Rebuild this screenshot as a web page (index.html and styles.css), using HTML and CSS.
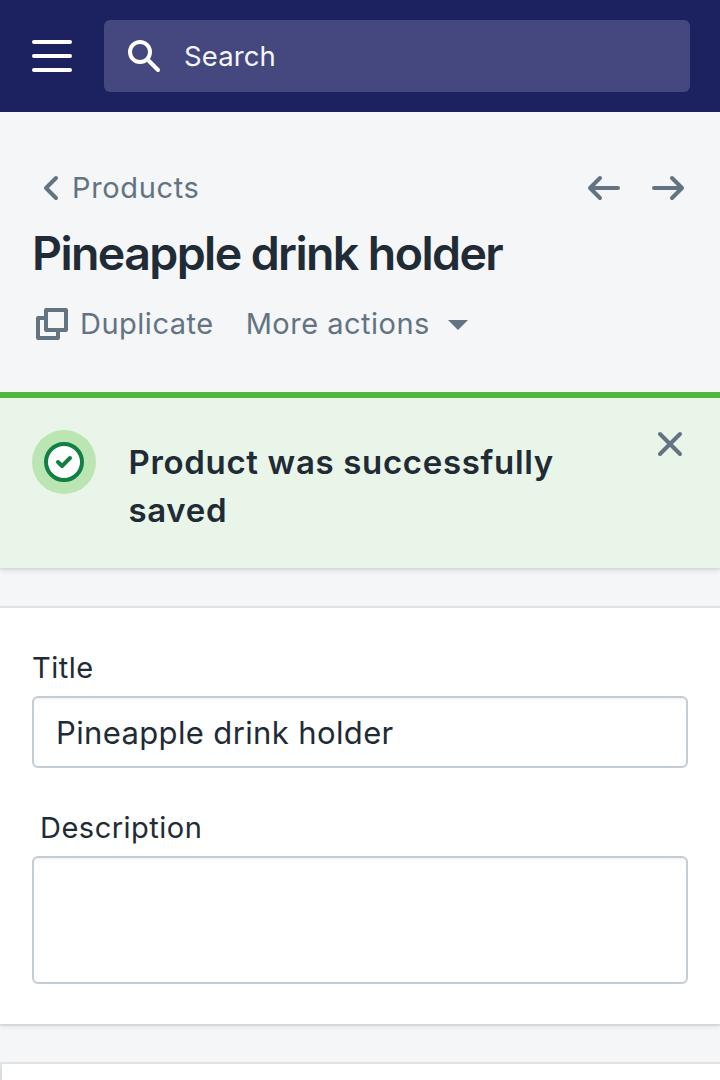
FILE: index.html
```html
<!DOCTYPE html>
<html lang="en">
<head>
<meta charset="utf-8">
<title>Pineapple drink holder</title>
<link rel="stylesheet" href="styles.css">
</head>
<body>
<header class="topbar">
  <svg class="menu" width="40" height="32" viewBox="0 0 40 32"><path d="M2 2h36M2 16h36M2 30h36"/></svg>
  <div class="search">
    <svg class="search-icon" width="32" height="32" viewBox="0 0 32 32"><circle cx="12" cy="12" r="10"/><path d="M19.5 19.5L30 30"/></svg>
    <span class="search-text">Search</span>
  </div>
</header>
<section class="page-header">
  <div class="nav-row">
    <a class="breadcrumb"><svg class="icon" width="16" height="24" viewBox="0 0 16 24"><path d="M14 2L4 12l10 10"/></svg><span class="crumb-text">Products</span></a>
    <div class="pager">
      <svg class="icon" width="32" height="24" viewBox="0 0 32 24"><path d="M12 2L2 12l10 10M2 12h28"/></svg>
      <svg class="icon" width="32" height="24" viewBox="0 0 32 24"><path d="M20 2l10 10-10 10M30 12H2"/></svg>
    </div>
  </div>
  <h1 class="title"><span class="title-text">Pineapple drink holder</span></h1>
  <div class="actions">
    <svg class="duplicate-icon" width="32" height="32" viewBox="0 0 32 32"><path d="M10 2h20v20H10zM10 10H2v20h20v-8"/></svg>
    <span class="duplicate-text">Duplicate</span>
    <span class="more-text">More actions</span>
    <svg class="caret" width="20" height="10" viewBox="0 0 20 10"><path d="M0 0h20L10 10z"/></svg>
  </div>
</section>
<section class="banner">
  <svg class="badge" width="64" height="64" viewBox="0 0 64 64"><circle class="halo" cx="32" cy="32" r="32"/><circle class="ring" cx="32" cy="32" r="18"/><path class="check" d="M26 32l4 4 8-8"/></svg>
  <p class="message">Product was successfully<br>saved</p>
  <svg class="icon close" width="24" height="24" viewBox="0 0 24 24"><path d="M2 2l20 20M22 2L2 22"/></svg>
</section>
<section class="card">
  <div class="label"><span class="label-title">Title</span></div>
  <div class="field"><span class="field-text">Pineapple drink holder</span></div>
  <div class="label description"><span class="label-desc">Description</span></div>
  <div class="field area"></div>
</section>
<section class="card next"></section>
</body>
</html>
```
FILE: styles.css
```css
* { box-sizing: border-box; }
body {
  margin: 0;
  height: 1080px;
  overflow: hidden;
  background: #f4f6f8;
  color: #212b36;
  font-family: Inter, sans-serif;
  font-size: 29px;
}
svg { display: block; flex: none; overflow: visible; fill: none; stroke-linecap: round; stroke-linejoin: round; }
.topbar { display: flex; align-items: center; height: 112px; padding: 0 30px 0 32px; background: #1c2260; }
.menu { stroke: #fff; stroke-width: 4; }
.search { display: flex; align-items: center; flex: 1; height: 72px; margin-left: 32px; padding-left: 24px; border-radius: 6px; background: #45477f; }
.search-icon { stroke: #fff; stroke-width: 4; }
.search-text { margin-left: 24px; color: #f4f5fa; font-size: 27.5px; letter-spacing: 0.1px; }
.page-header { height: 280px; padding: 56px 36px 0 32px; color: #637381; }
.nav-row { display: flex; align-items: center; justify-content: space-between; height: 40px; }
.icon { stroke: #637381; stroke-width: 4; }
.breadcrumb { display: flex; align-items: center; padding-left: 10px; }
.crumb-text { margin-left: 14px; padding-bottom: 2px; letter-spacing: 0.65px; }
.pager { display: flex; gap: 32px; }
.title { margin: 17px 0 0; height: 56px; line-height: 56px; color: #212b36; font-size: 46.5px; font-weight: 600; letter-spacing: -1.6px; white-space: nowrap; }
.actions { display: flex; align-items: center; height: 40px; margin-top: 23px; padding-left: 4px; line-height: 40px; }
.duplicate-icon { stroke: #637381; stroke-width: 4; }
.duplicate-text { margin-left: 12px; letter-spacing: 0.5px; }
.more-text { margin-left: 32px; letter-spacing: 0.5px; }
.caret { margin: 2px 0 0 18px; fill: #637381; }
.banner {
  display: flex;
  align-items: flex-start;
  height: 176px;
  padding: 38px 38px 0 32px;
  background: #eaf5e9;
  box-shadow: inset 0 6px #50b83c, 0 2px 0 rgba(63, 63, 68, .05), 0 2px 6px rgba(63, 63, 68, .15);
  clip-path: inset(0 0 -12px 0);
}
.halo { fill: #bbe5b3; }
.ring { fill: #fff; stroke: #108043; stroke-width: 4; }
.check { stroke: #108043; stroke-width: 4; }
.message { margin: 8px 0 0 32.5px; font-size: 33px; font-weight: 600; line-height: 48px; letter-spacing: 0.67px; white-space: nowrap; }
.close { margin: 2px 0 0 auto; }
.card {
  height: 416px;
  margin-top: 40px;
  padding: 40px 32px 0;
  background: #fff;
  box-shadow: 0 0 0 2px rgba(63, 63, 68, .09), 0 2px 6px rgba(63, 63, 68, .13);
}
.label { height: 40px; line-height: 40px; letter-spacing: 0.5px; }
.description { margin-top: 40px; padding-left: 8px; }
.field {
  display: flex;
  align-items: center;
  height: 72px;
  margin-top: 8px;
  padding-left: 22px;
  border: 2px solid #c4cdd5;
  border-radius: 6px;
  box-shadow: inset 0 2px 2px rgba(99, 115, 129, .07);
}
.field-text { font-size: 31px; letter-spacing: 0.37px; }
.area { height: 128px; }
.next { height: 60px; margin-left: 2px; padding: 0; }
```
